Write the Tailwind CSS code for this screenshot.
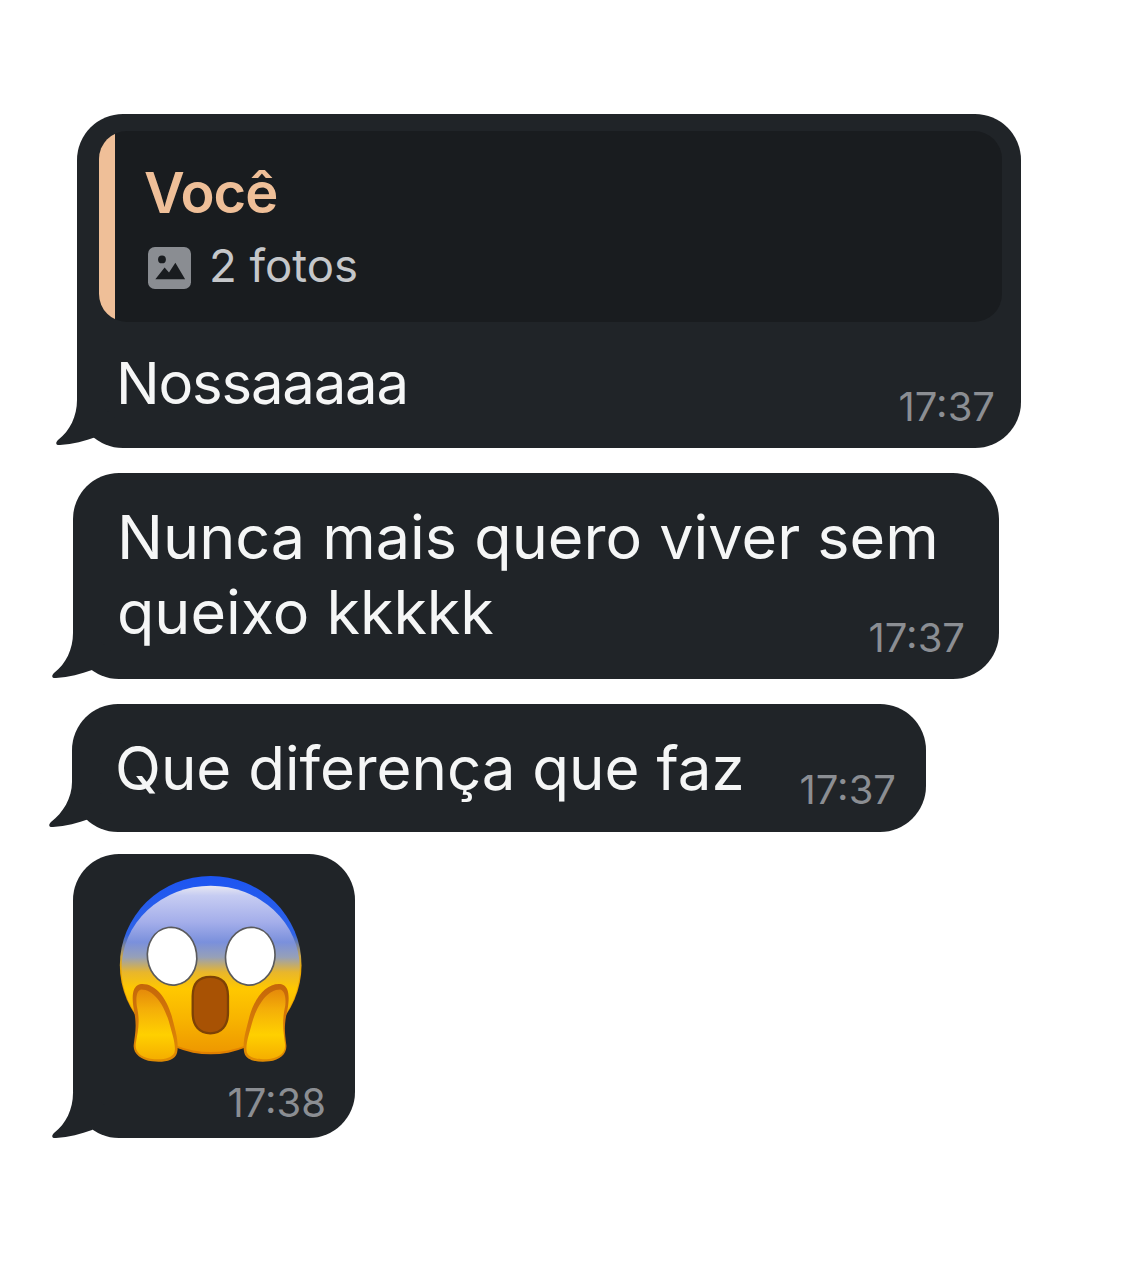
<!DOCTYPE html>
<html lang="pt-BR">
<head>
    <meta charset="UTF-8">
    <title>Conversa</title>
    <script src="https://cdn.jsdelivr.net/npm/@tailwindcss/browser@4"></script>
</head>
<body class="bg-white font-['Inter',sans-serif]">

<div class="w-[1126px] h-[1284px] pt-[114px] flex flex-col items-start overflow-hidden">

    <!-- Reply bubble -->
    <div class="relative ml-[77px] w-[944px] h-[334px] bg-[#202428] rounded-[46px] pt-[17px] pl-[22px] pr-[19px]">
        <svg class="absolute left-[-22px] bottom-0 w-[70px] h-[50px]" viewBox="0 0 70 50"><path fill="#202428" d="M40 2L22 2C22 18 15 33 3 42C0 45 1 47.5 5 47C18 46 30 43 41 39L60 20Z"/></svg>
        <div class="relative flex h-[191px] bg-[#191c1f] rounded-[28px] overflow-hidden">
            <div class="w-[16px] bg-[#efbf98]"></div>
            <div class="pl-[29px] pt-[28px]">
                <div class="text-[56px] leading-[68px] font-semibold text-[#efbf98] tracking-[-1px]">Você</div>
                <div class="flex items-center gap-[19px] mt-[14px] ml-[4px]">
                    <svg class="w-[43px] h-[42px] mt-[3px]" viewBox="0 0 44 43">
                        <rect width="44" height="43" rx="7" fill="#8a8d92"/>
                        <circle cx="14.3" cy="12.7" r="4" fill="#191c1f"/>
                        <path fill="#191c1f" d="M7.5 33L17 21L21.5 26L28 16L38 33Z"/>
                    </svg>
                    <span class="text-[45.5px] leading-[50px] text-[#c5c7ca] -ml-[1px]">2 fotos</span>
                </div>
            </div>
        </div>
        <div class="relative flex justify-between items-end pl-[17px] pr-[7px] mt-[24px]">
            <span class="text-[58px] leading-[74px] tracking-[-1.2px] text-[#f5f6f6]">Nossaaaaa</span>
            <span class="text-[40px] leading-[48px] text-[#8b8e93] mb-[-11px]">17:37</span>
        </div>
    </div>

    <!-- Two lines -->
    <div class="relative ml-[73px] mt-[25px] w-[926px] h-[206px] bg-[#202428] rounded-[46px] pt-[27px] pl-[44px] pr-[34px]">
        <svg class="absolute left-[-22px] bottom-[-2px] w-[70px] h-[50px]" viewBox="0 0 70 50"><path fill="#202428" d="M40 2L22 2C22 18 15 33 3 42C0 45 1 47.5 5 47C18 46 30 43 41 39L60 20Z"/></svg>
        <div class="relative text-[61.1px] leading-[75px] text-[#f5f6f6]">Nunca mais quero viver sem</div>
        <div class="relative flex justify-between items-end">
            <span class="text-[61px] leading-[75px] text-[#f5f6f6]">queixo kkkkk</span>
            <span class="text-[40px] leading-[48px] text-[#8b8e93] mb-[-12px]">17:37</span>
        </div>
    </div>

    <!-- One line -->
    <div class="relative ml-[72px] mt-[25px] w-[854px] h-[128px] bg-[#202428] rounded-[46px] pt-[27px] pl-[43px] pr-[30px]">
        <svg class="absolute left-[-24px] bottom-[2px] w-[70px] h-[50px]" viewBox="0 0 70 50"><path fill="#202428" d="M40 2L24 2C24 18 15 33 3 42C0 45 1 47.5 5 47C18 46 30 43 41 39L60 20Z"/></svg>
        <div class="relative flex justify-between items-end">
            <span class="text-[60px] leading-[75px] text-[#f5f6f6]">Que diferença que faz</span>
            <span class="text-[40px] leading-[48px] text-[#8b8e93] mb-[-8px]">17:37</span>
        </div>
    </div>

    <!-- Emoji -->
    <div class="relative ml-[73px] mt-[22px] w-[282px] h-[284px] bg-[#202428] rounded-[46px] pt-[19px] pl-[44px] pr-[29px]">
        <svg class="absolute left-[-22px] bottom-[-3px] w-[70px] h-[50px]" viewBox="0 0 70 50"><path fill="#202428" d="M40 2L22 2C22 18 15 33 3 42C0 45 1 47.5 5 47C18 46 30 43 41 39L60 20Z"/></svg>
        <svg class="relative w-[190px] h-[193px]" viewBox="200 70 570 580">
            <defs>
                <linearGradient id="rim" x1="0" y1="0" x2="0" y2="1">
                    <stop offset="0" stop-color="#1d55f2"/>
                    <stop offset="0.33" stop-color="#2f63e6"/>
                    <stop offset="0.45" stop-color="#c9a64a"/>
                    <stop offset="0.52" stop-color="#eeaa00"/>
                    <stop offset="1" stop-color="#e07f00"/>
                </linearGradient>
                <linearGradient id="face" x1="0" y1="0" x2="0" y2="1">
                    <stop offset="0" stop-color="#e8e8f2"/>
                    <stop offset="0.06" stop-color="#c6ccf2"/>
                    <stop offset="0.22" stop-color="#a4aeea"/>
                    <stop offset="0.34" stop-color="#7a90dc"/>
                    <stop offset="0.43" stop-color="#96a0b8"/>
                    <stop offset="0.52" stop-color="#e8b62c"/>
                    <stop offset="0.62" stop-color="#ffc800"/>
                    <stop offset="0.8" stop-color="#f8b400"/>
                    <stop offset="1" stop-color="#ee9800"/>
                </linearGradient>
                <linearGradient id="handRim" x1="0" y1="0" x2="0" y2="1">
                    <stop offset="0" stop-color="#c4660a"/>
                    <stop offset="0.5" stop-color="#d67a08"/>
                    <stop offset="1" stop-color="#e08c02"/>
                </linearGradient>
                <linearGradient id="hand" x1="0" y1="0" x2="0" y2="1">
                    <stop offset="0" stop-color="#e58a0a"/>
                    <stop offset="0.3" stop-color="#f5b008"/>
                    <stop offset="0.65" stop-color="#ffd000"/>
                    <stop offset="1" stop-color="#f5ae00"/>
                </linearGradient>
            </defs>
            <ellipse cx="481" cy="347" rx="273" ry="268" fill="url(#rim)"/>
            <ellipse cx="481" cy="358" rx="268" ry="250" fill="url(#face)"/>
            <ellipse cx="365" cy="320" rx="74" ry="87" transform="rotate(-8 365 320)" fill="#fff" stroke="#5a5a5c" stroke-width="5"/>
            <ellipse cx="600" cy="320" rx="74" ry="87" transform="rotate(8 600 320)" fill="#fff" stroke="#5a5a5c" stroke-width="5"/>
            <path fill="#a85204" stroke="#7e4206" stroke-width="7" d="M480 382C512 382 533 398 533 440L533 490C533 530 512 552 480 552C448 552 427 530 427 490L427 440C427 398 448 382 480 382Z"/>
            <path fill="url(#handRim)" d="M268 404C310 398 347 440 364 500C374 540 387 580 380 610C374 634 340 640 305 636C270 632 246 610 250 585C254 550 260 530 250 480C244 445 244 410 268 404Z"/>
            <path fill="url(#hand)" d="M272 420C310 420 340 465 355 515C366 555 378 590 372 610C362 630 330 632 300 628C270 624 252 606 256 582C262 545 270 520 259 470C256 445 258 424 272 420Z"/>
            <path fill="url(#handRim)" d="M694 404C652 398 615 440 598 500C588 540 575 580 582 610C588 634 622 640 657 636C692 632 712 610 708 585C704 550 700 530 712 480C718 445 718 410 694 404Z"/>
            <path fill="url(#hand)" d="M690 420C652 420 622 465 607 515C596 555 584 590 590 610C600 630 632 632 662 628C692 624 708 606 704 582C700 545 694 520 705 470C708 445 704 424 690 420Z"/>
        </svg>
        <div class="relative text-right text-[40px] leading-[48px] text-[#8b8e93] mt-[13px]">17:38</div>
    </div>

</div>

</body>
</html>
